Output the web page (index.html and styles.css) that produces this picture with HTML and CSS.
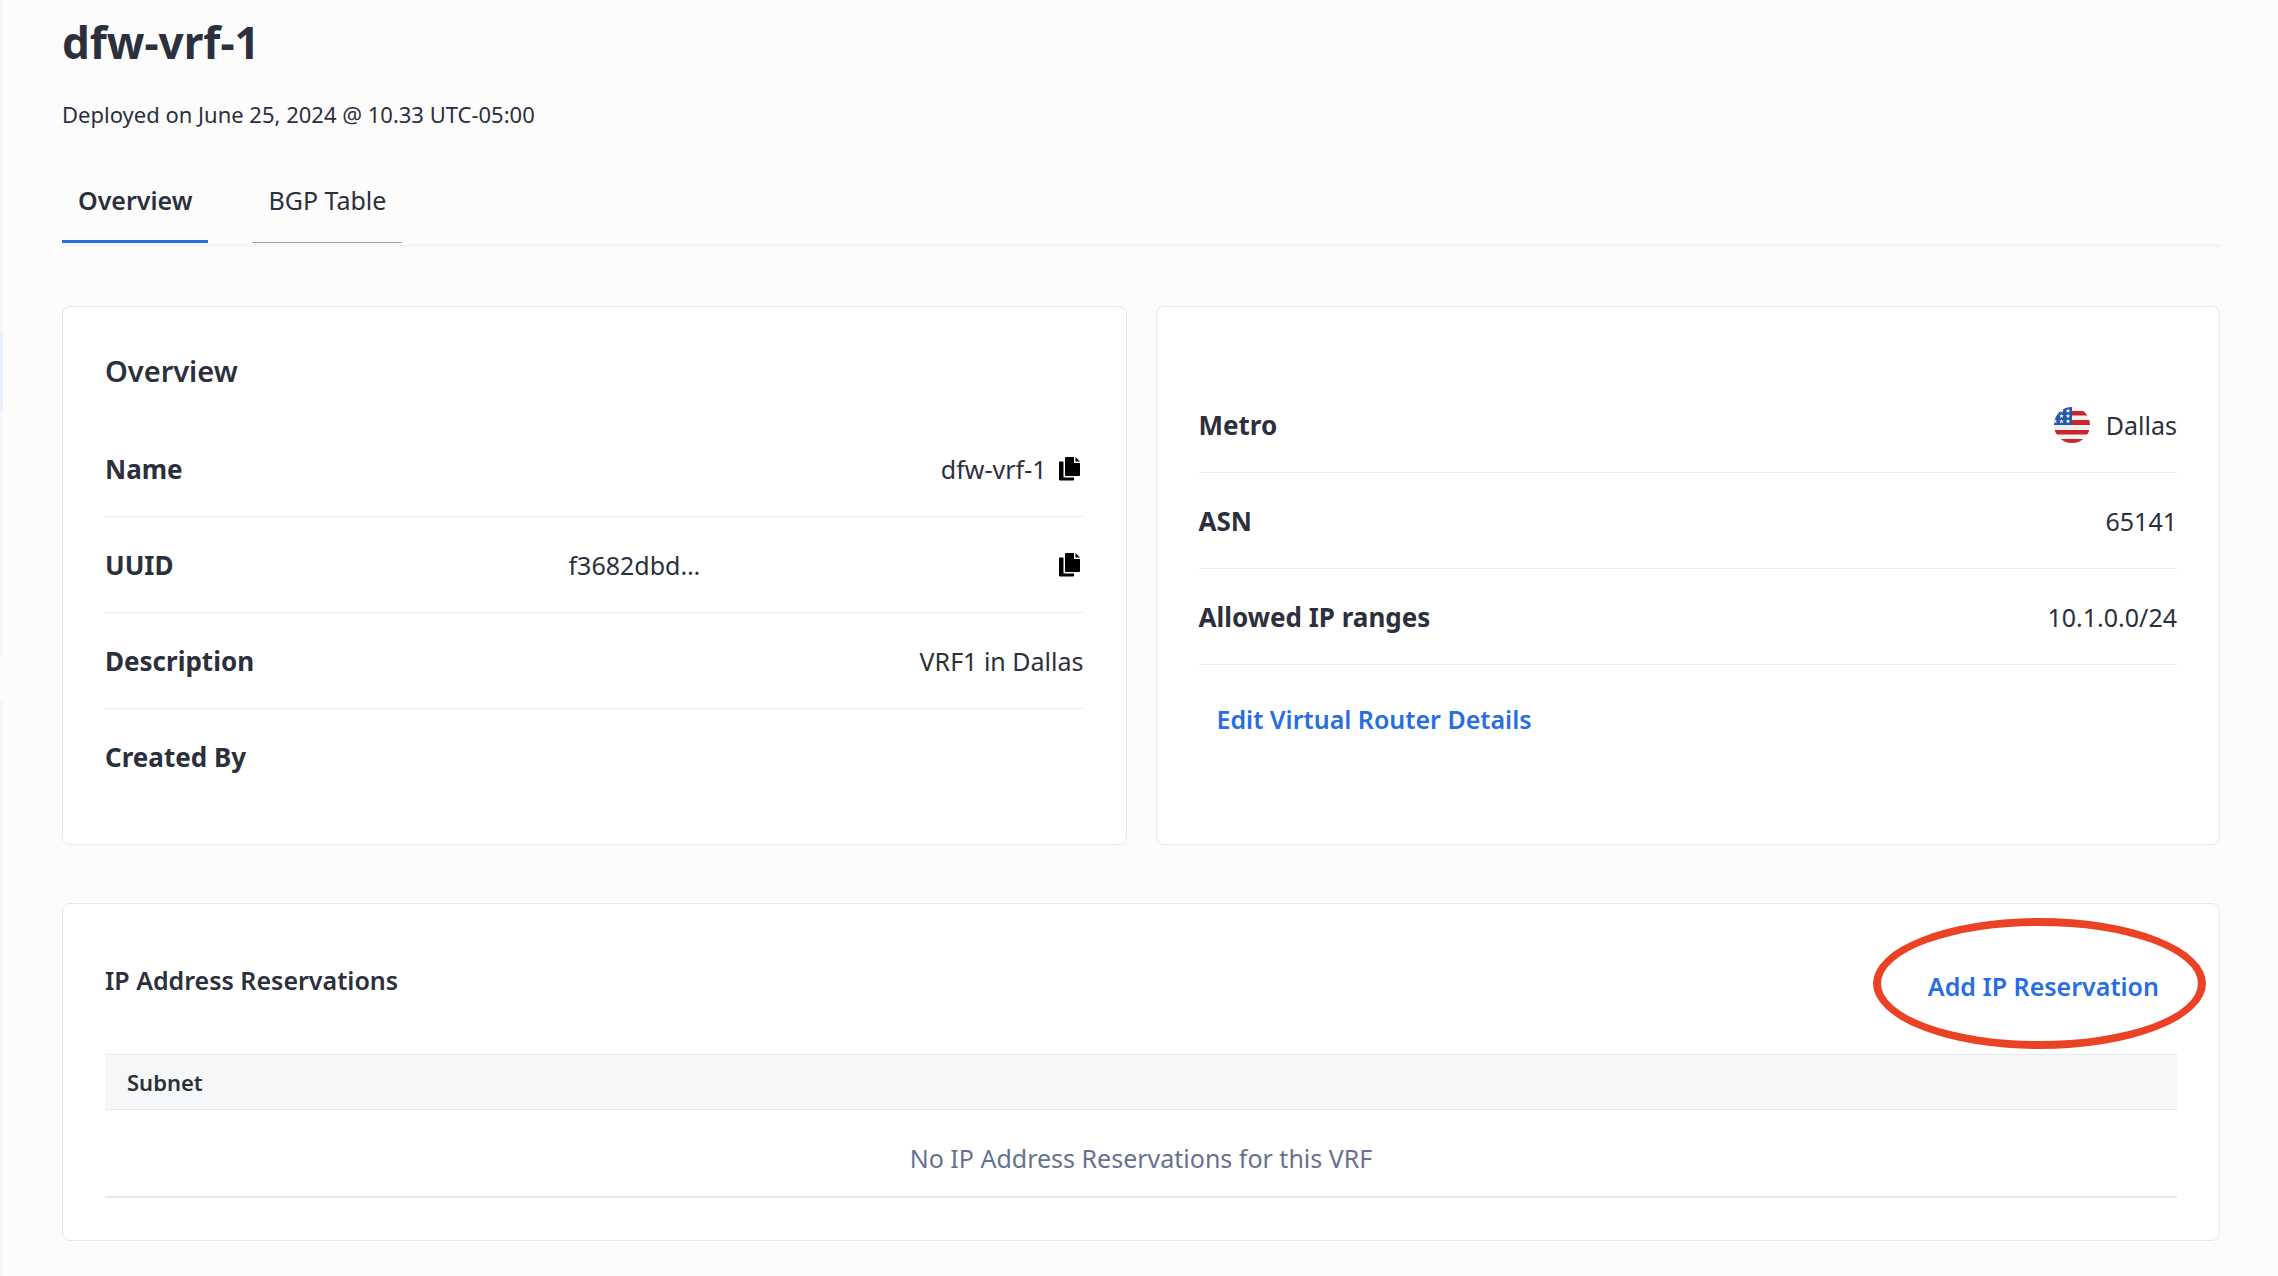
FILE: index.html
```
<!DOCTYPE html>
<html lang="en">
<head>
  <meta charset="UTF-8" />
  <meta name="viewport" content="width=device-width, initial-scale=1.0"/>
  <title>dfw-vrf-1</title>
  <link rel="stylesheet" href="styles.css">
</head>
<body>
  <div class="layout">
    <aside class="sidebar">
      <div class="sidebar-active"></div>
      <div class="sidebar-item"></div>
    </aside>
    <main class="content">
      <h1>dfw-vrf-1</h1>
      <p class="deployed">Deployed on June 25, 2024 @ 10.33 UTC-05:00</p>

      <nav class="tabs">
        <a class="tab active" href="#overview">Overview</a>
        <a class="tab" href="#bgp">BGP Table</a>
      </nav>

      <div class="cards" id="overview">
        <section class="card">
          <h2>Overview</h2>
          <dl class="details">
            <div class="row">
              <dt>Name</dt>
              <dd>
                <span>dfw-vrf-1</span>
                <button class="copy-btn" type="button" aria-label="Copy name">
                  <svg viewBox="0 0 21 24" width="21" height="24"><path d="M7 0h8v6h6v12a1 1 0 0 1-1 1H7a1 1 0 0 1-1-1V1a1 1 0 0 1 1-1zM16.500 0L21 4.500h-4.500zM1 4.500h3.500V20.500H15V22.500a1 1 0 0 1-1 1H1a1 1 0 0 1-1-1V5.500a1 1 0 0 1 1-1z"/></svg>
                </button>
              </dd>
            </div>
            <div class="row">
              <dt>UUID</dt>
              <dd class="uuid">
                <span>f3682dbd…</span>
                <button class="copy-btn" type="button" aria-label="Copy UUID">
                  <svg viewBox="0 0 21 24" width="21" height="24"><path d="M7 0h8v6h6v12a1 1 0 0 1-1 1H7a1 1 0 0 1-1-1V1a1 1 0 0 1 1-1zM16.500 0L21 4.500h-4.500zM1 4.500h3.500V20.500H15V22.500a1 1 0 0 1-1 1H1a1 1 0 0 1-1-1V5.500a1 1 0 0 1 1-1z"/></svg>
                </button>
              </dd>
            </div>
            <div class="row">
              <dt>Description</dt>
              <dd>VRF1 in Dallas</dd>
            </div>
            <div class="row last">
              <dt>Created By</dt>
              <dd></dd>
            </div>
          </dl>
        </section>

        <section class="card card-metro">
          <dl class="details">
            <div class="row">
              <dt>Metro</dt>
              <dd>
                <svg class="flag" viewBox="0 0 36 36" width="36" height="36">
                  <clipPath id="round"><circle cx="18" cy="18" r="18"/></clipPath>
                  <g clip-path="url(#round)">
                    <path fill="#f0f0f0" d="M0 0h36v36H0z"/>
                    <path fill="#c9252d" d="M18 4h18v4.500H18zM18 13h18v5H18zM0 23h36v4.500H0zM0 32h36v4H0z"/>
                    <path fill="#2459a9" d="M0 0h18v18H0z"/>
                    <g fill="#fff">
                      <path id="star" d="M14 1.500l.6 1.500h1.700l-1.300 1 .5 1.700-1.500-1-1.500 1 .5-1.700-1.300-1h1.700z"/>
                      <use href="#star" x="-6.500"/>
                      <use href="#star" y="5.300"/>
                      <use href="#star" x="-6.500" y="5.300"/>
                      <use href="#star" y="10.600"/>
                      <use href="#star" x="-6.500" y="10.600"/>
                      <use href="#star" x="-13" y="10.600"/>
                    </g>
                  </g>
                </svg>
                <span>Dallas</span>
              </dd>
            </div>
            <div class="row">
              <dt>ASN</dt>
              <dd>65141</dd>
            </div>
            <div class="row">
              <dt>Allowed IP ranges</dt>
              <dd>10.1.0.0/24</dd>
            </div>
          </dl>
          <button class="link-btn" type="button">Edit Virtual Router Details</button>
        </section>
      </div>

      <section class="card reservations">
        <div class="reservations-header">
          <h3>IP Address Reservations</h3>
          <div class="highlight">
            <button class="link-btn" type="button">Add IP Reservation</button>
          </div>
        </div>
        <table>
          <thead>
            <tr><th scope="col">Subnet</th></tr>
          </thead>
          <tbody>
            <tr><td>No IP Address Reservations for this VRF</td></tr>
          </tbody>
        </table>
      </section>
    </main>
  </div>
</body>
</html>
```
FILE: styles.css
```
* {
  box-sizing: border-box;
}
body {
  margin: 0;
  font-family: "Noto Sans", sans-serif;
  font-size: 25px;
  line-height: 36px;
  color: #2b303c;
  background: #fcfcfc;
}
h1, h2, h3, p, dl, dd {
  margin: 0;
}
.layout {
  display: flex;
  min-height: 100vh;
}
.sidebar {
  width: 3px;
  padding-top: 330px;
  background: #f6f7f9;
}
.sidebar-active {
  height: 80px;
  background: #e8f1fd;
}
.sidebar-item {
  height: 44px;
  margin-top: 246px;
  background: #fafcff;
}
.content {
  flex: 1;
  padding: 12px 58px 34px 59px;
}
h1 {
  font-size: 44px;
  line-height: 60px;
  font-weight: 700;
}
.deployed {
  margin-top: 24px;
  font-size: 22px;
}
.tabs {
  display: flex;
  align-items: flex-end;
  gap: 44px;
  margin-top: 50px;
  padding-bottom: 1px;
  border-bottom: 3px solid #f6f6f6;
}
.tab {
  padding: 0 16px 24px;
  color: inherit;
  text-decoration: none;
  border-bottom: 1px solid #99a1b3;
}
.tab.active {
  font-weight: 600;
  padding-bottom: 22px;
  border-bottom: 3px solid #286ee0;
}
.cards {
  display: grid;
  grid-template-columns: 1fr 1fr;
  gap: 29px;
  margin-top: 59px;
}
.card {
  padding: 42px 42px 40px;
  background: #fff;
  border: 1px solid #e7e8ec;
  border-radius: 8px;
}
h2 {
  margin-bottom: 28px;
  font-size: 29px;
  line-height: 44px;
  font-weight: 600;
}
.row {
  display: flex;
  justify-content: space-between;
  align-items: center;
  padding: 30px 0 29px;
  border-bottom: 1px solid #ececee;
}
.row.last {
  border-bottom: 0;
}
dt {
  font-size: 26px;
  font-weight: 700;
}
dd {
  display: flex;
  align-items: center;
}
.uuid {
  justify-content: space-between;
}
.row dt:has(+ .uuid) {
  flex: 9 1 0;
}
.row .uuid {
  flex: 10 1 0;
}
button {
  padding: 0;
  font: inherit;
  background: none;
  border: 0;
  cursor: pointer;
}
.copy-btn {
  display: flex;
  margin: 0 4px 0 12px;
}
.flag {
  margin-right: 16px;
}
.card-metro {
  padding-top: 70px;
}
.link-btn {
  padding: 0 18px;
  font-weight: 600;
  color: #286ee0;
}
.card-metro .link-btn {
  margin-top: 36px;
}
.reservations {
  margin-top: 58px;
  padding-bottom: 42px;
}
.reservations-header {
  display: flex;
  justify-content: space-between;
  padding: 16px 0 12px;
}
h3 {
  font-size: 25px;
  font-weight: 600;
}
.highlight {
  position: relative;
  margin-top: 6px;
  margin-bottom: 38px;
}
/* red ring drawn over the button */
.highlight::after {
  content: "";
  position: absolute;
  inset: -50px -29px -45px -37px;
  border: 8px solid #eb4226;
  border-radius: 50%;
  pointer-events: none;
}
table {
  width: 100%;
  border-collapse: separate;
  border-spacing: 0;
}
th {
  padding: 9px 22px;
  font-size: 22px;
  font-weight: 600;
  text-align: left;
  background: #f5f7f9;
  border-top: 1px solid #e6e8ec;
  border-bottom: 1px solid #e6e8ec;
}
td {
  padding: 30px 22px 20px;
  text-align: center;
  color: #66718f;
  border-bottom: 2px solid #e6e8ee;
}
```
